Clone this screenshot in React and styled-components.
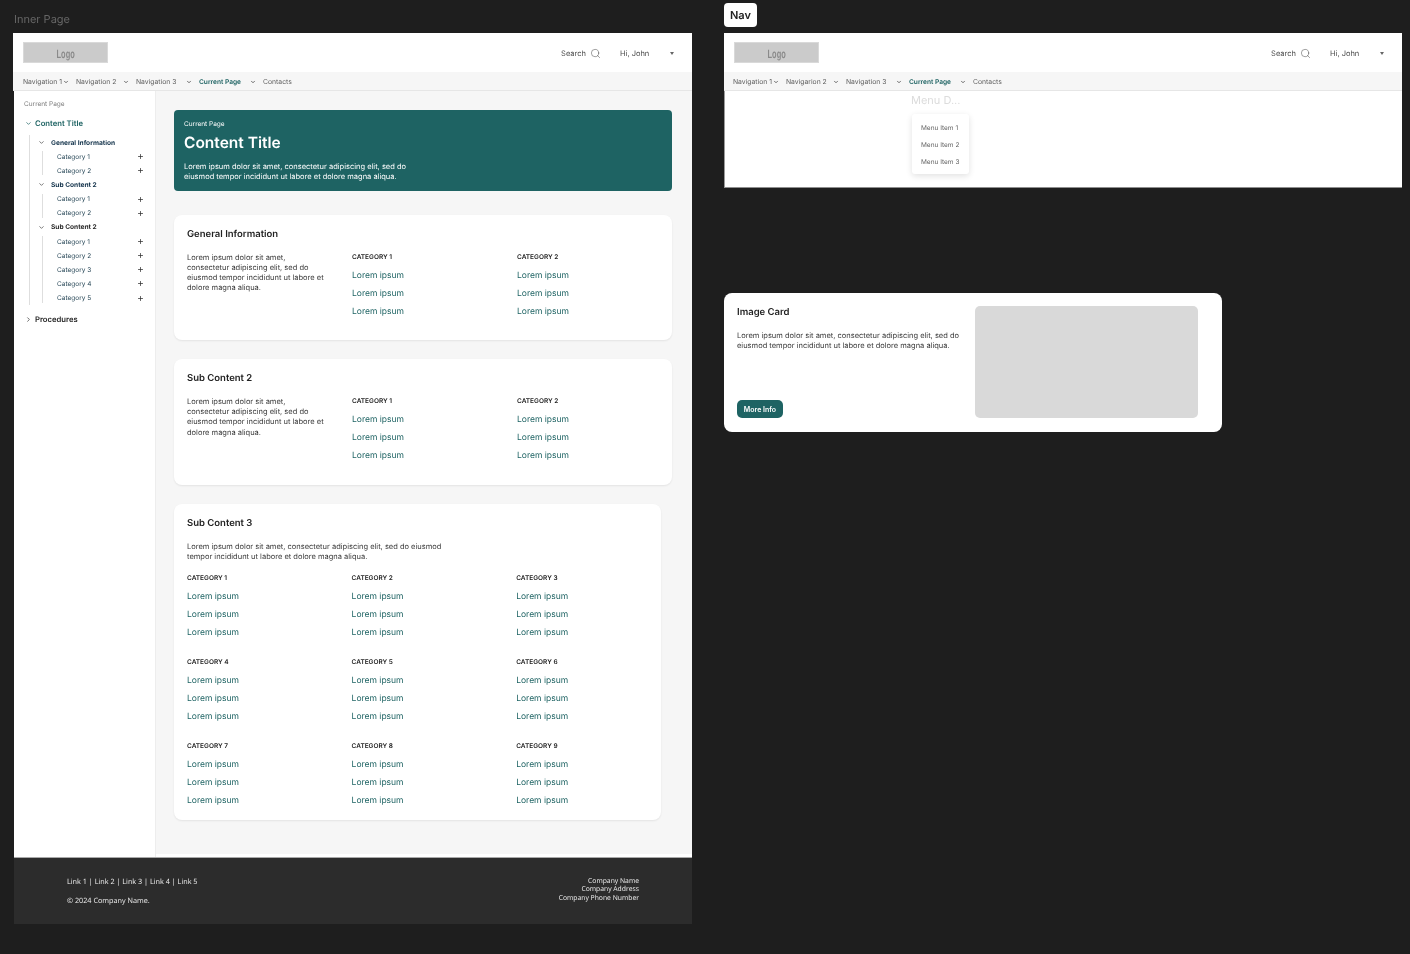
import React from 'react'
import styled, { createGlobalStyle } from 'styled-components'
import { ChevronDown, ChevronRight, Plus, Search } from 'lucide-react'

const teal = '#1e6363'

const GlobalStyle = createGlobalStyle`
  html, body {
    margin: 0;
    padding: 0;
    background: #1e1e1e;
  }
  * {
    box-sizing: border-box;
  }
`

const Canvas = styled.div`
  position: relative;
  width: 1410px;
  height: 954px;
  overflow: hidden;
  background: #1e1e1e;
  font-family: Inter, "Liberation Sans", sans-serif;
  text-rendering: geometricPrecision;
  will-change: transform;
  color: #333;
`

const FrameLabel = styled.div`
  position: absolute;
  left: 14px;
  top: 13px;
  font-size: 11px;
  line-height: 13px;
  color: #666;
`

const FrameTag = styled.div`
  position: absolute;
  left: 724px;
  top: 3px;
  width: 33px;
  height: 24px;
  display: flex;
  align-items: center;
  justify-content: center;
  background: #fff;
  border-radius: 4px;
  font-size: 11px;
  font-weight: 600;
  color: #222;
`

const Frame = styled.div`
  position: absolute;
  left: ${props => props.$left}px;
  top: ${props => props.$top}px;
  width: ${props => props.$width}px;
  height: ${props => props.$height}px;
  display: flex;
  flex-direction: column;
  background: #fff;
`

const TopBar = styled.header`
  height: 39px;
  flex: none;
  display: flex;
  align-items: center;
  justify-content: space-between;
  margin-left: ${props => (props.$flush ? 0 : -1)}px;
  padding: 0 18px 0 10px;
  background: #fff;
`

const Logo = styled.div`
  width: 85px;
  height: 21px;
  display: flex;
  align-items: flex-end;
  justify-content: center;
  background: #cbcbcb;
  border: 1px solid #d9d9d9;
`

const LogoText = styled.span`
  display: inline-block;
  font-family: "Liberation Sans", sans-serif;
  font-size: 12px;
  line-height: 15px;
  font-weight: 700;
  color: #8a8a8a;
  transform: scaleX(0.62);
`

const UserTools = styled.div`
  display: flex;
  align-items: center;
  padding-top: 1px;
  font-size: 7.5px;
  color: #4d4d4d;
`

const SearchBox = styled.div`
  display: flex;
  align-items: center;
  gap: 4px;
  margin-right: 19px;
`

const UserName = styled.span`
  width: 50px;
`

const Caret = styled.span`
  width: 0;
  height: 0;
  border-left: 2px solid transparent;
  border-right: 2px solid transparent;
  border-top: 3px solid #666;
`

const NavBar = styled.nav`
  height: 19px;
  flex: none;
  display: flex;
  align-items: center;
  margin-left: ${props => (props.$flush ? 0 : -1)}px;
  padding: 1px 0 0 ${props => (props.$flush ? 9 : 10)}px;
  background: #f6f6f6;
  border-bottom: 1px solid #e6e6e6;
`

const NavItem = styled.div`
  width: ${props => props.$width}px;
  flex: none;
  display: flex;
  align-items: center;
  justify-content: space-between;
  padding-right: 7px;
  white-space: nowrap;
  font-size: ${props => (props.$current ? 6.6 : 6.8)}px;
  line-height: 18px;
  font-weight: ${props => (props.$current ? 600 : 400)};
  color: ${props => (props.$current ? teal : '#5e5e5e')};
  svg {
    flex: none;
    color: #333;
  }
`

const PageBody = styled.div`
  flex: 1;
  min-height: 0;
  display: flex;
`

const Sidebar = styled.aside`
  width: 142px;
  flex: none;
  padding: 0 11px 0 10px;
  background: #fff;
  border-right: 1px solid #ededed;
`

const Crumb = styled.div`
  margin-top: 8px;
  padding-top: 1px;
  font-size: 6.5px;
  line-height: 9px;
  color: #7d7d7d;
`

const TopicRow = styled.div`
  height: 12px;
  margin-top: ${props => props.$gap}px;
  display: flex;
  align-items: center;
  gap: 3px;
  padding-left: 1px;
  font-size: 7.7px;
  font-weight: 600;
  color: ${props => (props.$open ? teal : '#262626')};
  svg {
    flex: none;
  }
`

const Tree = styled.div`
  margin: 6px 0 0 5px;
  border-left: 1px solid #dedede;
  padding-left: 8px;
`

const GroupRow = styled.div`
  height: 14.15px;
  display: flex;
  align-items: center;
  gap: 6px;
  padding-top: 1px;
  font-size: 6.6px;
  font-weight: 700;
  color: ${props => props.$color || '#12324a'};
`

const CategoryList = styled.div`
  position: relative;
  padding-left: 19px;
  &::before {
    content: '';
    position: absolute;
    left: 4px;
    top: 2px;
    bottom: 2px;
    width: 1px;
    background: #dedede;
  }
`

const CategoryRow = styled.div`
  height: 14.15px;
  display: flex;
  align-items: center;
  justify-content: space-between;
  padding-top: 1px;
  font-size: 6.5px;
  color: #2b4a5a;
  svg {
    flex: none;
    color: #333;
  }
`

const Content = styled.main`
  flex: 1;
  min-width: 0;
  margin-bottom: 3px;
  padding: 19px 20px 0 18px;
  display: flex;
  flex-direction: column;
  background: #f6f6f6;
`

const Hero = styled.section`
  height: 81px;
  flex: none;
  margin-bottom: 24px;
  padding: 10px 10px;
  background: ${teal};
  border-radius: 4px;
  color: #fff;
`

const HeroCrumb = styled.div`
  font-size: 6.5px;
  line-height: 9px;
`

const HeroTitle = styled.h1`
  margin: 4px 0 8.5px;
  font-size: 15.5px;
  line-height: 20px;
  font-weight: 600;
`

const HeroText = styled.p`
  margin: 0;
  width: 235px;
  font-size: 7.5px;
  line-height: 10.5px;
`

const Card = styled.section`
  flex: none;
  margin-right: ${props => props.$inset || 0}px;
  margin-bottom: 19px;
  padding: 13px 13px ${props => props.$bottom || 19.4}px;
  background: #fff;
  border-radius: 8px;
  box-shadow: 0 1px 2px rgba(0, 0, 0, 0.08);
`

const CardTitle = styled.h2`
  margin: 0;
  padding-top: 1px;
  height: 12px;
  font-size: 9.5px;
  line-height: 12px;
  font-weight: 600;
  color: #222;
`

const CardRow = styled.div`
  margin-top: 12px;
  display: grid;
  grid-template-columns: repeat(3, 165px);
`

const BodyText = styled.p`
  margin: 0.5px 0 0;
  font-size: 7.5px;
  line-height: 10.3px;
  color: #3a3a3a;
  width: ${props => props.$width}px;
`

const IntroText = styled(BodyText)`
  margin: 13px 0 10.4px;
`

const CategoryGrid = styled.div`
  display: grid;
  grid-template-columns: repeat(3, 164.6px);
  row-gap: 15.3px;
`

const CategoryLabel = styled.div`
  height: 10px;
  margin-bottom: 5px;
  font-size: 6.5px;
  line-height: 10px;
  font-weight: 600;
  text-transform: uppercase;
  color: #222;
`

const LinkLine = styled.div`
  font-size: 8.5px;
  line-height: 18px;
  color: ${teal};
`

const Footer = styled.footer`
  height: 67px;
  flex: none;
  display: flex;
  justify-content: space-between;
  padding: 19px 53px 0;
  background: #2c2c2c;
  border-top: 1px solid #a9a9a9;
  font-family: "Open Sans", sans-serif;
  font-size: 7.25px;
  color: #f0f0f0;
`

const FooterLinks = styled.div`
  line-height: 10px;
`

const Copyright = styled.div`
  margin-top: 9px;
  line-height: 10px;
`

const FooterAddress = styled.div`
  line-height: 8.3px;
  font-size: 6.8px;
  text-align: right;
`

const NavCanvas = styled.div`
  position: relative;
  flex: 1;
  border-left: 1px solid #9a9a9a;
  border-bottom: 1px solid #8e8e8e;
`

const MenuTitle = styled.div`
  position: absolute;
  left: 186px;
  top: 2px;
  font-size: 11px;
  line-height: 14px;
  color: #dcdcdc;
`

const Menu = styled.div`
  position: absolute;
  left: 187px;
  top: 23px;
  width: 57px;
  height: 60px;
  padding: 6px 0 0 9px;
  background: #fff;
  border-radius: 3px;
  box-shadow: 0 2px 6px rgba(0, 0, 0, 0.12);
`

const MenuItem = styled.div`
  font-size: 6.5px;
  line-height: 17px;
  color: #666;
`

const ImageCard = styled.section`
  position: absolute;
  left: 724px;
  top: 293px;
  width: 498px;
  height: 139px;
  display: flex;
  justify-content: space-between;
  padding: 13px 24px 14px 13px;
  background: #fff;
  border-radius: 8px;
`

const ImageCardText = styled.div`
  width: 226px;
  display: flex;
  flex-direction: column;
  align-items: flex-start;
`

const ImageCardBody = styled.p`
  margin: 13px 0 0;
  font-size: 7.5px;
  line-height: 10.3px;
  color: #3a3a3a;
`

const MoreButton = styled.button`
  margin-top: auto;
  width: 46px;
  height: 18px;
  padding: 0;
  border: 0;
  border-radius: 5px;
  background: ${teal};
  font-family: inherit;
  font-size: 7px;
  font-weight: 600;
  color: #fff;
`

const ImagePlaceholder = styled.div`
  width: 223px;
  height: 112px;
  background: #d9d9d9;
  border-radius: 5px;
`

const navWidths = [53, 60, 63, 64]

const Masthead = ({ flush, second = 'Navigation 2' }) => (
  <>
    <TopBar $flush={flush}>
      <Logo><LogoText>Logo</LogoText></Logo>
      <UserTools>
        <SearchBox>
          <span>Search</span>
          <Search size={11} strokeWidth={1} color="#333" />
        </SearchBox>
        <UserName>Hi, John</UserName>
        <Caret />
      </UserTools>
    </TopBar>
    <NavBar $flush={flush}>
      {['Navigation 1', second, 'Navigation 3', 'Current Page'].map((name, i) => (
        <NavItem key={name} $width={navWidths[i]} $current={i === 3}>
          {name}
          <ChevronDown size={6} strokeWidth={2.8} />
        </NavItem>
      ))}
      <NavItem $width={40}>Contacts</NavItem>
    </NavBar>
  </>
)

const groups = [
  { name: 'General Information', count: 2 },
  { name: 'Sub Content 2', count: 2 },
  { name: 'Sub Content 2', count: 5, color: '#2a2a2a' }
]

const SideTree = () => (
  <Sidebar>
    <Crumb>Current Page</Crumb>
    <TopicRow $gap={8} $open>
      <ChevronDown size={7} strokeWidth={2.4} />
      Content Title
    </TopicRow>
    <Tree>
      {groups.map((group, g) => (
        <div key={g}>
          <GroupRow $color={group.color}>
            <ChevronDown size={7} strokeWidth={2.2} color="#333" />
            {group.name}
          </GroupRow>
          <CategoryList>
            {Array.from({ length: group.count }, (_, i) => (
              <CategoryRow key={i}>
                Category {i + 1}
                <Plus size={7} strokeWidth={2.6} />
              </CategoryRow>
            ))}
          </CategoryList>
        </div>
      ))}
    </Tree>
    <TopicRow $gap={9}>
      <ChevronRight size={7} strokeWidth={2.4} color="#333" />
      Procedures
    </TopicRow>
  </Sidebar>
)

const LinkColumn = ({ title }) => (
  <div>
    <CategoryLabel>{title}</CategoryLabel>
    <LinkLine>Lorem ipsum</LinkLine>
    <LinkLine>Lorem ipsum</LinkLine>
    <LinkLine>Lorem ipsum</LinkLine>
  </div>
)

const TwoColumnCard = ({ title }) => (
  <Card>
    <CardTitle>{title}</CardTitle>
    <CardRow>
      <BodyText $width={140}>
        Lorem ipsum dolor sit amet, consectetur adipiscing elit, sed do eiusmod tempor incididunt ut labore et dolore magna aliqua.
      </BodyText>
      <LinkColumn title="Category 1" />
      <LinkColumn title="Category 2" />
    </CardRow>
  </Card>
)

export default function App () {
  return (
    <Canvas>
      <GlobalStyle />
      <FrameLabel>Inner Page</FrameLabel>
      <Frame $left={14} $top={33} $width={678} $height={891}>
        <Masthead />
        <PageBody>
          <SideTree />
          <Content>
            <Hero>
              <HeroCrumb>Current Page</HeroCrumb>
              <HeroTitle>Content Title</HeroTitle>
              <HeroText>Lorem ipsum dolor sit amet, consectetur adipiscing elit, sed do eiusmod tempor incididunt ut labore et dolore magna aliqua.</HeroText>
            </Hero>
            <TwoColumnCard title="General Information" />
            <TwoColumnCard title="Sub Content 2" />
            <Card $inset={11} $bottom={10}>
              <CardTitle>Sub Content 3</CardTitle>
              <IntroText $width={262}>
                Lorem ipsum dolor sit amet, consectetur adipiscing elit, sed do eiusmod tempor incididunt ut labore et dolore magna aliqua.
              </IntroText>
              <CategoryGrid>
                {[1, 2, 3, 4, 5, 6, 7, 8, 9].map(n => (
                  <LinkColumn key={n} title={`Category ${n}`} />
                ))}
              </CategoryGrid>
            </Card>
          </Content>
        </PageBody>
        <Footer>
          <div>
            <FooterLinks>Link 1 | Link 2 | Link 3 | Link 4 | Link 5</FooterLinks>
            <Copyright>© 2024 Company Name.</Copyright>
          </div>
          <FooterAddress>
            <div>Company Name</div>
            <div>Company Address</div>
            <div>Company Phone Number</div>
          </FooterAddress>
        </Footer>
      </Frame>

      <FrameTag>Nav</FrameTag>
      <Frame $left={724} $top={33} $width={678} $height={155}>
        <Masthead flush second="Navigarion 2" />
        <NavCanvas>
          <MenuTitle>Menu D...</MenuTitle>
          <Menu>
            <MenuItem>Menu Item 1</MenuItem>
            <MenuItem>Menu Item 2</MenuItem>
            <MenuItem>Menu Item 3</MenuItem>
          </Menu>
        </NavCanvas>
      </Frame>

      <ImageCard>
        <ImageCardText>
          <CardTitle>Image Card</CardTitle>
          <ImageCardBody>Lorem ipsum dolor sit amet, consectetur adipiscing elit, sed do eiusmod tempor incididunt ut labore et dolore magna aliqua.</ImageCardBody>
          <MoreButton>More Info</MoreButton>
        </ImageCardText>
        <ImagePlaceholder />
      </ImageCard>
    </Canvas>
  )
}
